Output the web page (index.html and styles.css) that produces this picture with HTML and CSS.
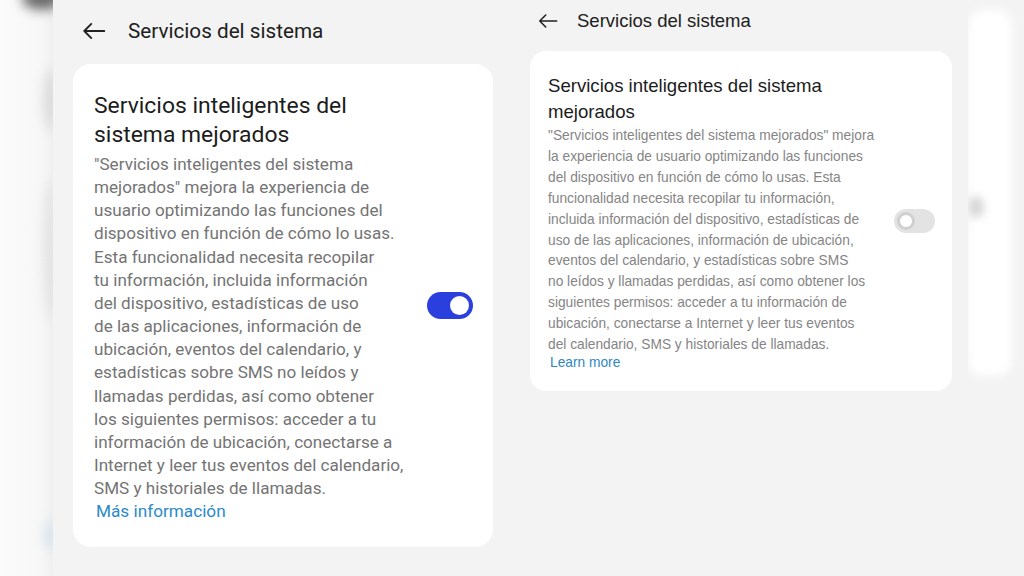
FILE: index.html
```html
<!DOCTYPE html>
<html lang="es">
<head>
<meta charset="utf-8">
<title>Servicios del sistema</title>
<link rel="stylesheet" href="styles.css">
</head>
<body>
<div class="stage">
  <div class="edge edge-left">
    <span class="blur blur-dark"></span>
    <span class="blur blur-a"></span>
    <span class="blur blur-b"></span>
    <span class="blur blur-c"></span>
  </div>

  <section class="screen screen-left">
    <header class="bar">
      <svg class="back" viewBox="0 0 24 24" width="26" height="26" aria-hidden="true"><path d="M21.5 12H3M9.5 5.5L3 12l6.5 6.5" fill="none" stroke="#222" stroke-width="1.7" stroke-linecap="round" stroke-linejoin="round"/></svg>
      <h1 class="bar-title">Servicios del sistema</h1>
    </header>
    <div class="card">
      <div class="card-text">
        <h2 class="card-title">Servicios inteligentes del<br>sistema mejorados</h2>
        <p class="card-desc">"Servicios inteligentes del sistema<br>mejorados" mejora la experiencia de<br>usuario optimizando las funciones del<br>dispositivo en función de cómo lo usas.<br>Esta funcionalidad necesita recopilar<br>tu información, incluida información<br>del dispositivo, estadísticas de uso<br>de las aplicaciones, información de<br>ubicación, eventos del calendario, y<br>estadísticas sobre SMS no leídos y<br>llamadas perdidas, así como obtener<br>los siguientes permisos: acceder a tu<br>información de ubicación, conectarse a<br>Internet y leer tus eventos del calendario,<br>SMS y historiales de llamadas.</p>
        <a class="card-link" href="#">Más información</a>
      </div>
      <span class="toggle toggle-on"><span class="knob"></span></span>
    </div>
  </section>

  <section class="screen screen-right">
    <header class="bar">
      <svg class="back" viewBox="0 0 24 24" width="22" height="22" aria-hidden="true"><path d="M21.5 12H3M9.5 5.5L3 12l6.5 6.5" fill="none" stroke="#222" stroke-width="1.7" stroke-linecap="round" stroke-linejoin="round"/></svg>
      <h1 class="bar-title">Servicios del sistema</h1>
    </header>
    <div class="card">
      <div class="card-text">
        <h2 class="card-title">Servicios inteligentes del sistema<br>mejorados</h2>
        <p class="card-desc">"Servicios inteligentes del sistema mejorados" mejora<br>la experiencia de usuario optimizando las funciones<br>del dispositivo en función de cómo lo usas. Esta<br>funcionalidad necesita recopilar tu información,<br>incluida información del dispositivo, estadísticas de<br>uso de las aplicaciones, información de ubicación,<br>eventos del calendario, y estadísticas sobre SMS<br>no leídos y llamadas perdidas, así como obtener los<br>siguientes permisos: acceder a tu información de<br>ubicación, conectarse a Internet y leer tus eventos<br>del calendario, SMS y historiales de llamadas.</p>
        <a class="card-link" href="#">Learn more</a>
      </div>
      <span class="toggle toggle-off"><span class="knob"></span></span>
    </div>
  </section>

  <div class="edge edge-right">
    <span class="glow"></span>
    <span class="blur blur-r"></span>
  </div>
</div>
</body>
</html>
```
FILE: styles.css
```css
* { box-sizing: border-box; margin: 0; padding: 0; }

html, body {
  width: 1024px;
  height: 576px;
  overflow: hidden;
}

body {
  background: #f3f3f3;
  font-family: Roboto, "Noto Sans", sans-serif;
}

.stage {
  display: flex;
  width: 1024px;
  height: 576px;
}

/* blurred surroundings */
.edge {
  position: relative;
  flex: none;
  overflow: hidden;
}

.edge-left {
  width: 53px;
  background: linear-gradient(90deg, #fbfbfb 0%, #f7f7f7 80%, #efefef 100%);
}

.blur {
  position: absolute;
  display: block;
  border-radius: 50%;
  filter: blur(6px);
}

.blur-dark { left: 22px; top: -14px; width: 40px; height: 24px; background: #6b6b6b; }
.blur-a { left: 44px; top: 70px; width: 14px; height: 60px; background: #d9d9d9; }
.blur-b { left: 44px; top: 180px; width: 14px; height: 140px; background: #e2e2e2; }
.blur-c { left: 44px; top: 520px; width: 14px; height: 30px; background: #d8e4ee; }
.blur-r { left: 0; top: 196px; width: 16px; height: 22px; background: #d6d6d6; filter: blur(4px); }

.edge-right {
  flex: 1;
}

.glow {
  position: absolute;
  display: block;
  left: 0;
  top: 10px;
  width: 44px;
  height: 366px;
  background: #ffffff;
  border-radius: 14px;
  filter: blur(5px);
}

/* screens */
.screen {
  flex: none;
  display: flex;
  flex-direction: column;
}

.bar {
  display: flex;
  align-items: center;
}

.bar-title {
  font-weight: 400;
  color: #202020;
}

.card {
  display: flex;
  align-items: flex-start;
  justify-content: space-between;
  background: #ffffff;
}

.card-title {
  font-weight: 400;
  color: #1c1c1c;
}

.card-desc {
  white-space: nowrap;
}

.card-link {
  display: block;
  text-decoration: none;
}

/* left screen */
.screen-left {
  width: 462px;
  padding: 0 20px 0 20px;
}

.screen-left .bar {
  height: 64px;
  padding: 0 0 2px 8px;
}

.screen-left .back {
  margin-right: 21px;
}

.screen-left .bar-title {
  font-size: 20.7px;
}

.screen-left .card {
  width: 420px;
  height: 483px;
  border-radius: 18px;
  padding: 27px 20px 27px 21px;
}

.screen-left .card-title {
  font-size: 22.9px;
  line-height: 29px;
  margin-bottom: 4px;
}

.screen-left .card-desc {
  font-size: 17.1px;
  line-height: 23.15px;
  color: #747474;
}

.screen-left .card-link {
  font-size: 17.2px;
  line-height: 23px;
  color: #2b8bcb;
  margin-left: 2px;
}

/* right screen */
.screen-right {
  width: 453px;
  padding: 0 16px 0 15px;
  font-family: "Liberation Sans", Arial, sans-serif;
}

.screen-right .bar {
  height: 51px;
  padding: 0 0 9px 7px;
}

.screen-right .back {
  margin-right: 18px;
}

.screen-right .bar-title {
  font-size: 18.5px;
}

.screen-right .card {
  width: 422px;
  height: 340px;
  border-radius: 16px;
  padding: 22px 17px 22px 18px;
}

.screen-right .card-title {
  font-size: 18.6px;
  line-height: 26px;
  margin-bottom: 1px;
}

.screen-right .card-desc {
  font-size: 13.75px;
  line-height: 20.9px;
  color: #858585;
}

.screen-right .card-link {
  font-size: 13.75px;
  line-height: 14px;
  color: #2f87c0;
  margin-left: 2px;
}

/* toggles */
.toggle {
  position: relative;
  display: block;
  flex: none;
  align-self: center;
  border-radius: 999px;
}

.toggle-on {
  width: 46px;
  height: 27px;
  background: #2b3fdf;
}

.toggle-on .knob {
  position: absolute;
  right: 4px;
  top: 4px;
  width: 19px;
  height: 19px;
  border-radius: 50%;
  background: #ffffff;
}

.toggle-off {
  width: 41px;
  height: 24px;
  background: #e3e3e3;
}

.toggle-off .knob {
  position: absolute;
  left: 3px;
  top: 3px;
  width: 18px;
  height: 18px;
  border-radius: 50%;
  background: #ffffff;
  border: 3.5px solid #d0d0d0;
}
```
